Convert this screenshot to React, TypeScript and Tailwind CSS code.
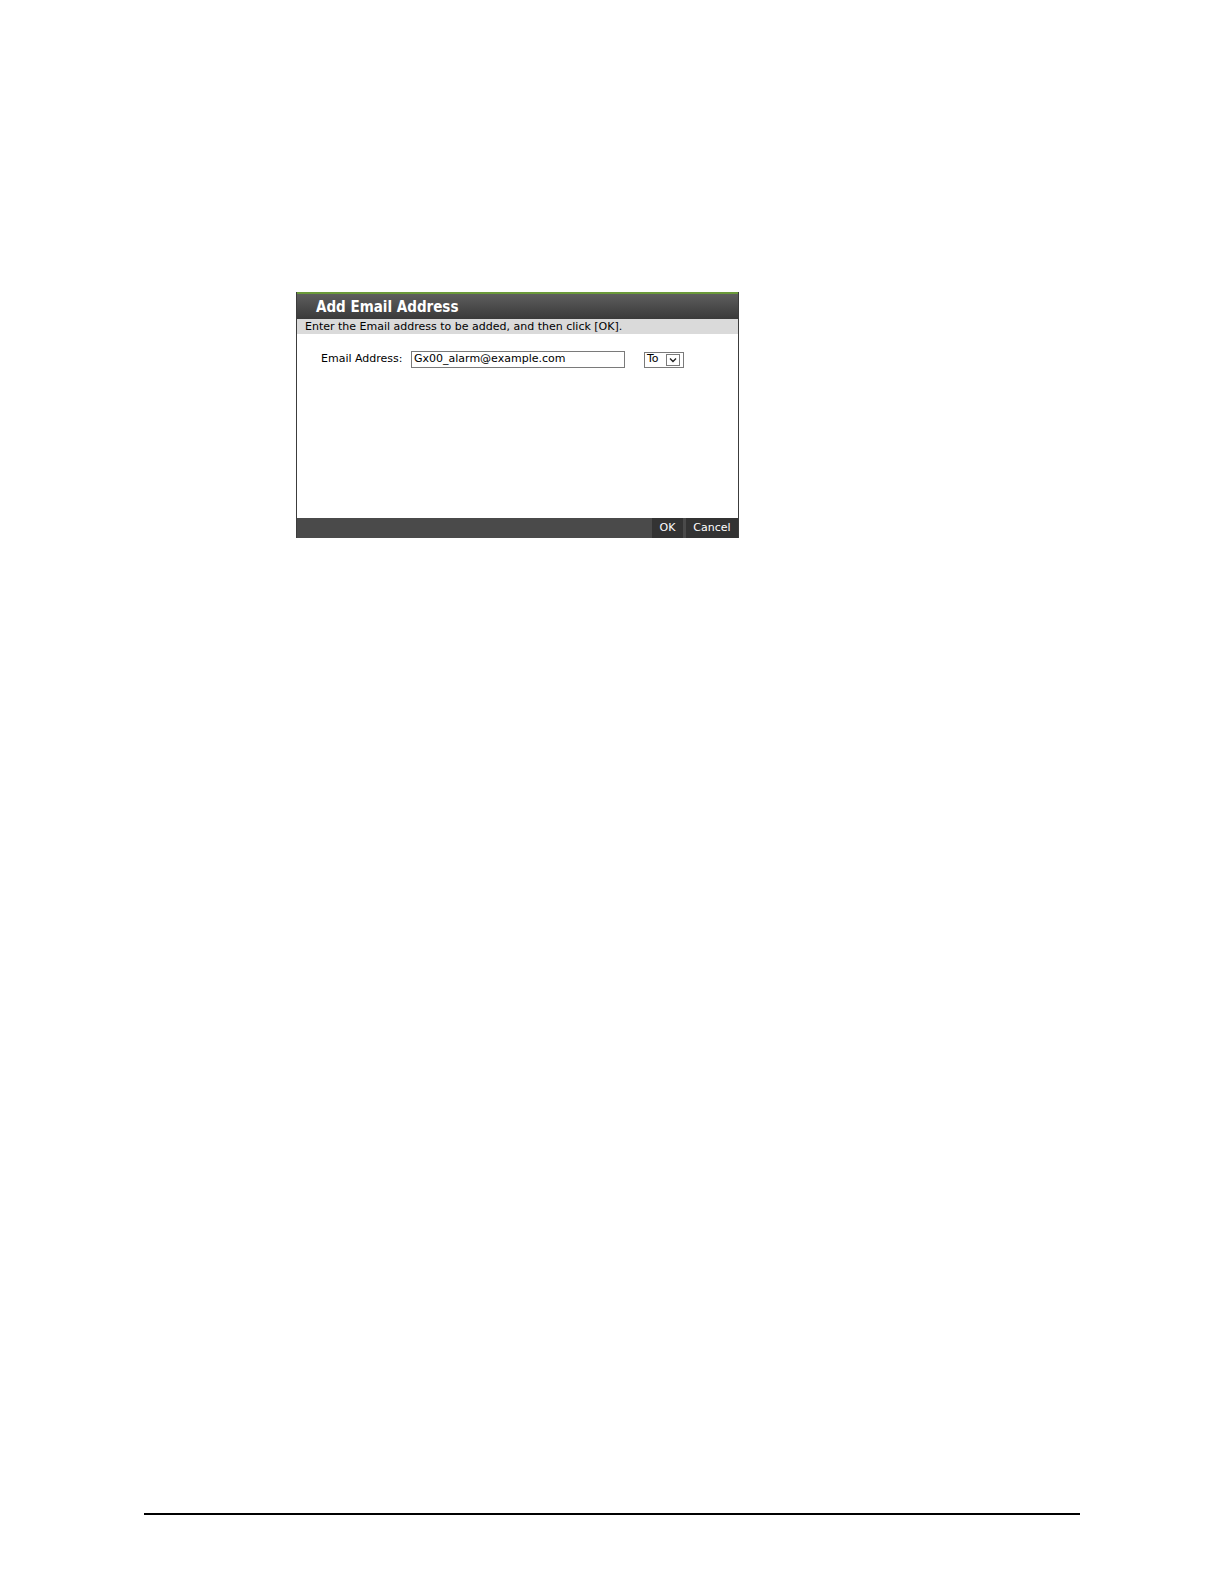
import React from 'react';

const titleFont = { fontFamily: '"DejaVu Sans Condensed", "DejaVu Sans", Tahoma, sans-serif' };
const bodyFont = { fontFamily: '"DejaVu Sans", Tahoma, sans-serif' };

function Dialog() {
  return (
    <div className="w-[443px] flex flex-col border-x border-[#3c3c3c]" style={bodyFont}>
      <div className="h-[27px] border-t-2 border-[#6b9a3a] bg-gradient-to-b from-[#5e5e5e] to-[#3a3a3a] flex items-center pl-[19px] pt-[1px]" style={titleFont}>
        <span className="text-white text-[15px] font-bold">Add Email Address</span>
      </div>
      <div className="h-[15px] bg-[#dadada] flex items-center pl-[8px] text-[11px] text-black leading-none">
        Enter the Email address to be added, and then click [OK].
      </div>
      <div className="h-[184px] bg-white pt-[17px] pl-[24px]">
        <div className="flex items-center text-[11px] text-black">
          <span className="w-[90px]">Email Address:</span>
          <div className="w-[214px] h-[17px] border border-[#7a7a7a] flex items-center pl-[2px]">Gx00_alarm@example.com</div>
          <div className="ml-[19px] h-[16px] w-[40px] border border-[#7a7a7a] flex items-center">
            <span className="pl-[2px] w-[21px]">To</span>
            <div className="h-[12px] w-[14px] border border-[#7a7a7a] flex items-center justify-center">
              <svg width="8" height="6" viewBox="0 0 8 6"><path d="M1 1.5 L4 4.5 L7 1.5" stroke="#222" strokeWidth="1.4" fill="none" /></svg>
            </div>
          </div>
        </div>
      </div>
      <div className="h-[20px] bg-[#4a4a4a] flex items-stretch justify-end text-[11px] text-white">
        <div className="w-[31px] bg-[#333333] flex items-center justify-center mr-[3px]">OK</div>
        <div className="w-[52px] bg-[#333333] flex items-center justify-center">Cancel</div>
      </div>
    </div>
  );
}

export default function App() {
  return (
    <div className="w-[1224px] h-[1584px] bg-white flex flex-col">
      <div className="mt-[292px] ml-[296px]">
        <Dialog />
      </div>
      <div className="mt-[975px] ml-[144px] w-[936px] h-[2px] bg-black" />
    </div>
  );
}
